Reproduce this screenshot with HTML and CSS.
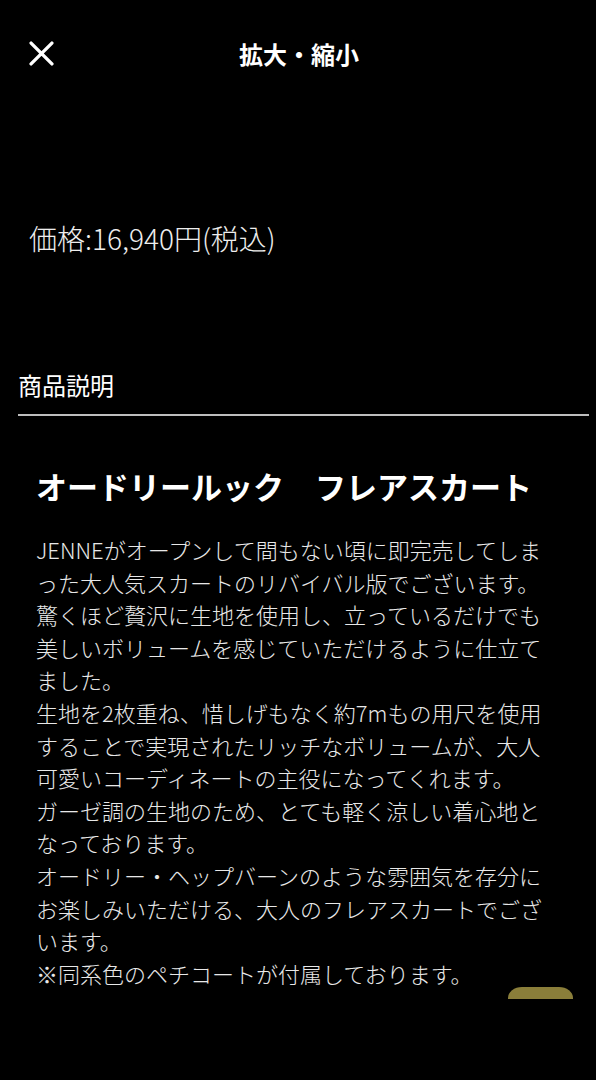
FILE: index.html
```html
<!DOCTYPE html>
<html lang="ja">
<head>
<meta charset="utf-8">
<title>拡大・縮小</title>
<link rel="stylesheet" href="styles.css">
</head>
<body>
<div class="page">
  <header class="topbar">
    <button class="close" aria-label="閉じる">
      <svg viewBox="0 0 24 24" width="25" height="25"><path d="M2 2 L22 22 M22 2 L2 22" stroke="#fff" stroke-width="3.2" stroke-linecap="round" fill="none"/></svg>
    </button>
    <h1 class="title">拡大・縮小</h1>
  </header>

  <p class="price">価格:16,940円(税込)</p>

  <h2 class="section-title">商品説明</h2>

  <section class="desc">
    <h3 class="product-name">オードリールック　フレアスカート</h3>
    <p class="desc-text">JENNEがオープンして間もない頃に即完売してしまった大人気スカートのリバイバル版でございます。<br>驚くほど贅沢に生地を使用し、立っているだけでも美しいボリュームを感じていただけるように仕立てました。<br>生地を2枚重ね、惜しげもなく約7mもの用尺を使用することで実現されたリッチなボリュームが、大人可愛いコーディネートの主役になってくれます。<br>ガーゼ調の生地のため、とても軽く涼しい着心地となっております。<br>オードリー・ヘップバーンのような雰囲気を存分にお楽しみいただける、大人のフレアスカートでございます。<br>※同系色のペチコートが付属しております。</p>
  </section>

  <div class="float-btn"></div>
</div>
</body>
</html>
```

FILE: styles.css
```css
html, body {
  margin: 0;
  padding: 0;
  background: #000;
}
body {
  font-family: "Noto Sans CJK JP", "Noto Sans", sans-serif;
  color: #fff;
}
.page {
  position: relative;
  width: 596px;
  height: 1080px;
  overflow: hidden;
  background: #000;
}
.topbar {
  position: relative;
  height: 108px;
  display: flex;
  align-items: center;
  justify-content: center;
}
.close {
  position: absolute;
  left: 29px;
  top: 41px;
  width: 25px;
  height: 25px;
  padding: 0;
  border: 0;
  background: none;
  display: block;
}
.close svg { display: block; }
.title {
  margin: 0;
  font-size: 24px;
  font-weight: 700;
  line-height: 1;
  color: #fff;
  padding-left: 2px;
}
.price {
  margin: 113px 0 0 29px;
  font-size: 28px;
  font-weight: 300;
  line-height: 34px;
  color: #eee;
}
.section-title {
  margin: 114px 7px 0 18px;
  padding: 0 0 13px 0;
  font-size: 24px;
  font-weight: 400;
  line-height: 32px;
  color: #fff;
  border-bottom: 2px solid #bdbdbd;
}
.desc {
  padding: 49px 0 0 36px;
  width: 515px;
}
.product-name {
  margin: 0 0 26px 0;
  font-size: 31px;
  font-weight: 700;
  line-height: 42px;
  color: #fff;
  white-space: nowrap;
}
.desc-text {
  margin: 0;
  font-size: 22px;
  font-weight: 300;
  line-height: 32.6px;
  color: #e8e8e8;
  line-break: loose;
}
.float-btn {
  position: absolute;
  left: 508px;
  top: 987px;
  width: 65px;
  height: 12px;
  background: #8a7e3a;
  border-radius: 14px 14px 0 0 / 11px 11px 0 0;
}
```
